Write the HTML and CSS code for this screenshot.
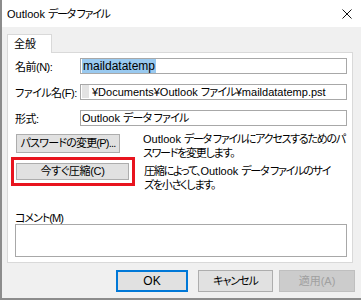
FILE: index.html
```html
<!DOCTYPE html>
<html lang="ja">
<head>
<meta charset="utf-8">
<title>Outlook データ ファイル</title>
<link rel="stylesheet" href="styles.css">
</head>
<body>
<div class="window">
  <div class="titlebar">
    <span class="title">Outlook <span class="j2">データ ファイル</span></span>
    <svg class="close" width="10" height="10" viewBox="0 0 10 10"><path d="M0.5 0.5 L9.5 9.5 M9.5 0.5 L0.5 9.5" stroke="#111" stroke-width="1"/></svg>
  </div>
  <div class="body">
    <div class="tabs"><div class="tab">全般</div></div>
    <div class="panel">
      <div class="row">
        <label class="lbl">名前(N):</label>
        <div class="field name"><span class="sel">maildatatemp</span></div>
      </div>
      <div class="row">
        <label class="lbl">ファイル名(F):</label>
        <div class="field"><span class="cut"></span>¥Documents¥Outlook <span class="j1">ファイル</span>¥maildatatemp.pst</div>
      </div>
      <div class="row">
        <label class="lbl">形式:</label>
        <div class="field">Outlook <span class="j1">データ ファイル</span></div>
      </div>
      <div class="action first">
        <button class="btn pw">パスワードの変更(P)...</button>
        <p class="desc d1">Outlook <span class="jd">データ ファイルにアクセスするためのパ<br>スワードを変更します。</span></p>
      </div>
      <div class="action second">
        <div class="redbox"><button class="btn cp">今すぐ圧縮(C)</button></div>
        <p class="desc d2"><span class="jd">圧縮によって、</span>Outlook <span class="jd">データ ファイルのサイ<br>ズを小さくします。</span></p>
      </div>
      <div class="comment">
        <div class="clbl">コメント(M)</div>
        <div class="cbox"></div>
      </div>
    </div>
    <div class="buttons">
      <button class="btn dlg ok">OK</button>
      <button class="btn dlg cancel">キャンセル</button>
      <button class="btn dlg dis">適用(A)</button>
    </div>
  </div>
</div>
</body>
</html>
```

FILE: styles.css
```css
* { box-sizing: border-box; }
html, body { margin: 0; padding: 0; }
body {
  width: 361px;
  height: 300px;
  overflow: hidden;
  font-family: "Liberation Sans", "Noto Sans CJK JP", sans-serif;
  font-feature-settings: "palt";
  font-size: 11px;
  color: #000;
  background: #f0f0f0;
}
.window {
  width: 361px;
  height: 300px;
  display: flex;
  flex-direction: column;
  border-left: 2px solid #8c8c8c;
  border-bottom: 2px solid #8c8c8c;
  background: #f0f0f0;
}
.titlebar {
  height: 27px;
  background: #fff;
  display: flex;
  align-items: center;
  justify-content: space-between;
  padding: 0 9px 0 5px;
  flex: none;
}
.title { font-size: 11px; line-height: 14px; white-space: nowrap; }
.j2 { letter-spacing: -1.3px; }
.j1 { letter-spacing: -0.8px; }
.jd { letter-spacing: -1.25px; }
.body {
  flex: 1;
  padding: 7px 8px 0 5px;
  display: flex;
  flex-direction: column;
}
.tabs { display: flex; height: 18px; flex: none; }
.tab {
  background: #fff;
  border: 1px solid #d9d9d9;
  border-bottom: none;
  padding: 0 0 0 6px;
  font-size: 11px;
  line-height: 18px;
  width: 45px;
  height: 19px;
  position: relative;
  z-index: 1;
}
.panel {
  background: #fff;
  border: 1px solid #d9d9d9;
  height: 211px;
  padding: 0 5px 0 7px;
  display: flex;
  flex-direction: column;
  flex: none;
}
.panel > * { flex: none; }
.row {
  display: flex;
  align-items: center;
  height: 26px;
}
.lbl { width: 65px; flex: none; white-space: nowrap; font-size: 11px; letter-spacing: -0.5px; }
.field {
  flex: 1;
  height: 16px;
  border: 1px solid #a8a8a8;
  background: #fff;
  padding: 0 2px 0 1px;
  line-height: 14px;
  white-space: nowrap;
  overflow: hidden;
  font-size: 11px;
}
.field.name { font-size: 12px; }
.sel { background: #99c9ef; padding: 0 1px; }
.cut {
  display: inline-block;
  width: 7px;
  height: 13px;
  background: #e3e3e3;
  vertical-align: -2px;
  margin-right: 3px;
}
.action {
  display: flex;
  align-items: flex-start;
}
.action.first { margin-top: 1px; height: 25px; margin-left: 1px; }
.action.second { margin-left: -4px; height: 29px; }
.btn {
  font-family: "Liberation Sans", "Noto Sans CJK JP", sans-serif;
  font-feature-settings: "palt";
  font-size: 11px;
  color: #000;
  background: #e1e1e1;
  border: 1px solid #adadad;
  padding: 0;
  height: 19px;
  line-height: 17px;
  flex: none;
  white-space: nowrap;
}
.pw { width: 104px; margin-top: 2px; letter-spacing: -0.8px; }
.redbox {
  flex: none;
  width: 124px;
  height: 29px;
  border: 3px solid #e8141e;
  padding: 3px 0 0 2px;
}
.cp { width: 113px; height: 17px; line-height: 15px; letter-spacing: -0.3px; }
.desc {
  margin: 0;
  line-height: 14px;
  white-space: nowrap;
}
.d1 { margin-left: 23px; }
.d2 { margin-left: 9px; margin-top: 7px; }
.comment { margin-top: 27px; }
.clbl { line-height: 11px; font-size: 11px; letter-spacing: -1px; }
.cbox {
  height: 33px;
  border: 1px solid #a8a8a8;
  background: #fff;
}
.buttons {
  display: flex;
  justify-content: flex-end;
  margin-top: 7px;
  margin-right: -2px;
}
.dlg { height: 22px; line-height: 20px; font-size: 11px; }
.ok { width: 72px; border-color: #0078d7; border-width: 2px; line-height: 18px; margin-right: 10px; font-size: 12px; }
.cancel { width: 75px; margin-right: 6px; letter-spacing: -1px; }
.dis { width: 76px; background: #cccccc; border-color: #bfbfbf; color: #a0a0a0; }
```
